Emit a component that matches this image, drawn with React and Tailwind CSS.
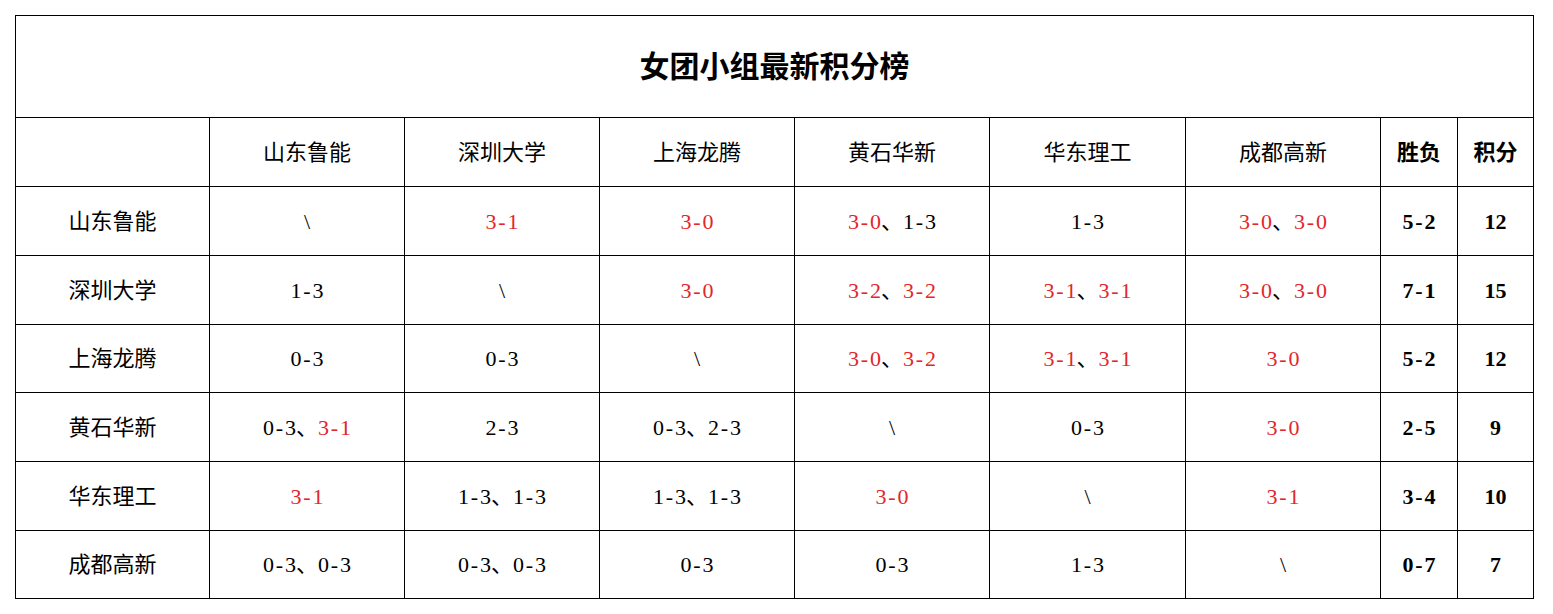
const teams = ['山东鲁能', '深圳大学', '上海龙腾', '黄石华新', '华东理工', '成都高新'];

// each cell: list of [score, isWin]
const rows = [
  {
    name: '山东鲁能',
    cells: [[['\\', 0]], [['3-1', 1]], [['3-0', 1]], [['3-0', 1], ['1-3', 0]], [['1-3', 0]], [['3-0', 1], ['3-0', 1]]],
    record: '5-2',
    points: '12',
    h: 'h-[69px]',
  },
  {
    name: '深圳大学',
    cells: [[['1-3', 0]], [['\\', 0]], [['3-0', 1]], [['3-2', 1], ['3-2', 1]], [['3-1', 1], ['3-1', 1]], [['3-0', 1], ['3-0', 1]]],
    record: '7-1',
    points: '15',
    h: 'h-[69px]',
  },
  {
    name: '上海龙腾',
    cells: [[['0-3', 0]], [['0-3', 0]], [['\\', 0]], [['3-0', 1], ['3-2', 1]], [['3-1', 1], ['3-1', 1]], [['3-0', 1]]],
    record: '5-2',
    points: '12',
    h: 'h-[68px]',
  },
  {
    name: '黄石华新',
    cells: [[['0-3', 0], ['3-1', 1]], [['2-3', 0]], [['0-3', 0], ['2-3', 0]], [['\\', 0]], [['0-3', 0]], [['3-0', 1]]],
    record: '2-5',
    points: '9',
    h: 'h-[69px]',
  },
  {
    name: '华东理工',
    cells: [[['3-1', 1]], [['1-3', 0], ['1-3', 0]], [['1-3', 0], ['1-3', 0]], [['3-0', 1]], [['\\', 0]], [['3-1', 1]]],
    record: '3-4',
    points: '10',
    h: 'h-[69px]',
  },
  {
    name: '成都高新',
    cells: [[['0-3', 0], ['0-3', 0]], [['0-3', 0], ['0-3', 0]], [['0-3', 0]], [['0-3', 0]], [['1-3', 0]], [['\\', 0]]],
    record: '0-7',
    points: '7',
    h: 'h-[68px]',
  },
];

const cell = 'border border-black text-center align-middle p-0';

// wider dash like the original's SimSun hyphen
function Pair({ s }) {
  if (!s.includes('-')) return s;
  const [a, b] = s.split('-');
  return (
    <>
      {a}
      <span className="inline-block w-[11px] text-center">-</span>
      {b}
    </>
  );
}

function Score({ parts }) {
  return (
    <>
      {parts.map(([s, win], i) => (
        <span key={i}>
          {i > 0 && <span className="text-black">、</span>}
          <span className={win ? 'text-[#e3262a]' : 'text-black'}>
            <Pair s={s} />
          </span>
        </span>
      ))}
    </>
  );
}

export default function App() {
  return (
    <div className="bg-white w-[1553px] h-[614px] pt-[15px] pl-[15px] font-['Liberation_Serif','Noto_Sans_CJK_SC',serif] text-[22px] text-black">
      <table className="table-fixed border-collapse w-[1518px]">
        <colgroup>
          <col className="w-[194px]" />
          <col className="w-[195px]" />
          <col className="w-[195px]" />
          <col className="w-[195px]" />
          <col className="w-[195px]" />
          <col className="w-[196px]" />
          <col className="w-[195px]" />
          <col className="w-[77px]" />
          <col className="w-[76px]" />
        </colgroup>
        <tbody>
          <tr className="h-[102px]">
            <td colSpan={9} className={`${cell} text-[30px] font-bold`}>女团小组最新积分榜</td>
          </tr>
          <tr className="h-[69px]">
            <td className={cell}></td>
            {teams.map((t) => (
              <td key={t} className={cell}>{t}</td>
            ))}
            <td className={`${cell} font-bold`}>胜负</td>
            <td className={`${cell} font-bold`}>积分</td>
          </tr>
          {rows.map((r) => (
            <tr key={r.name} className={r.h}>
              <td className={cell}>{r.name}</td>
              {r.cells.map((parts, i) => (
                <td key={i} className={cell}>
                  <Score parts={parts} />
                </td>
              ))}
              <td className={`${cell} font-bold`}>
                <Pair s={r.record} />
              </td>
              <td className={`${cell} font-bold`}>{r.points}</td>
            </tr>
          ))}
        </tbody>
      </table>
    </div>
  );
}
